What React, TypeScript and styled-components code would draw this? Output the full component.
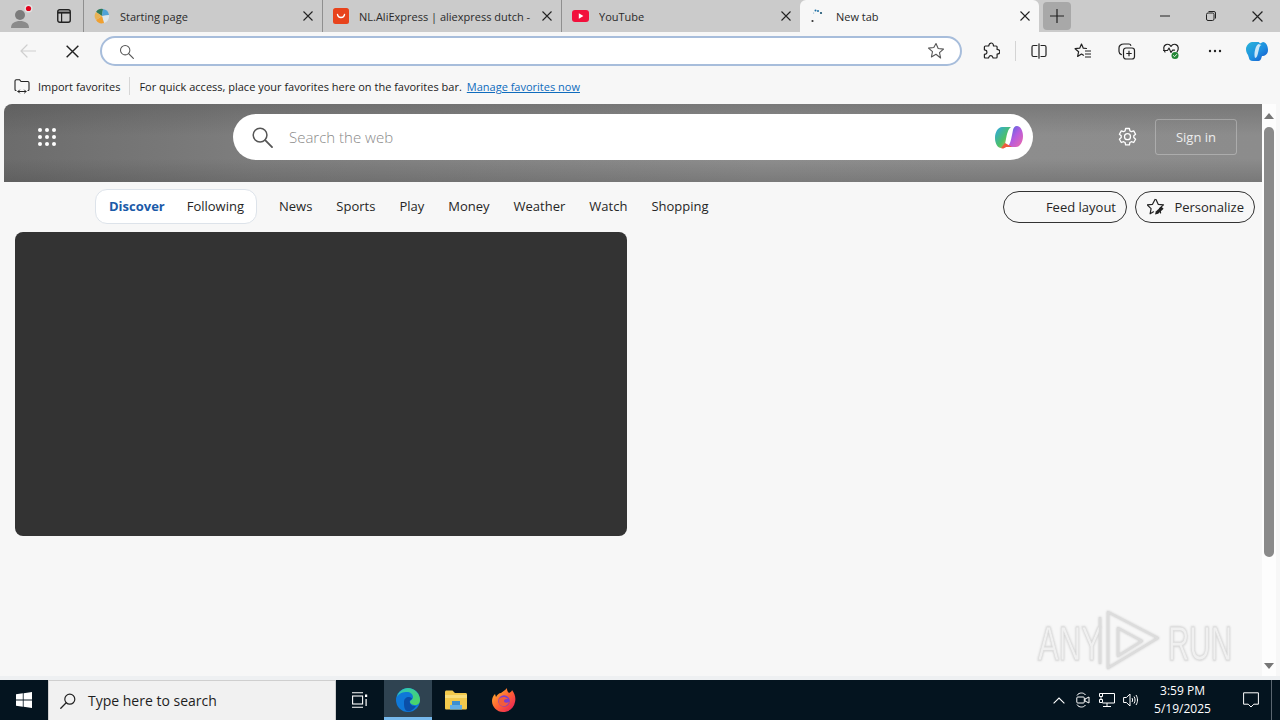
import React from 'react';
import styled, { createGlobalStyle } from 'styled-components';

const GlobalStyle = createGlobalStyle`
  html, body {
    margin: 0;
    padding: 0;
    background: #f7f7f7;
    overflow: hidden;
  }
  * {
    box-sizing: border-box;
  }
`;

const UI_FONT = `"Open Sans", "Noto Sans", "Liberation Sans", sans-serif`;

const Screen = styled.div`
  position: relative;
  width: 1280px;
  height: 720px;
  display: flex;
  flex-direction: column;
  overflow: hidden;
  font-family: ${UI_FONT};
  color: #1c1c1c;
  background: #f7f7f7;
`;

// Tab strip
const TabStrip = styled.div`
  height: 32px;
  display: flex;
  align-items: stretch;
  background: #cbcbcb;
`;

const ProfileSlot = styled.div`
  width: 44px;
  display: flex;
  align-items: center;
  justify-content: center;
`;

const VerticalTabsSlot = styled.div`
  width: 39px;
  display: flex;
  align-items: center;
  justify-content: center;
  padding-left: 0;
`;

const Tab = styled.div<{ $active?: boolean }>`
  position: relative;
  width: 239px;
  display: flex;
  align-items: center;
  padding: 0 9px 0 10px;
  gap: 10px;
  font-size: 11px;
  letter-spacing: 0;
  white-space: nowrap;
  background: ${(p) => (p.$active ? '#f7f7f7' : 'transparent')};
  border-radius: ${(p) => (p.$active ? '6px 6px 0 0' : '0')};
  border-left: ${(p) => (p.$active ? '0' : '1px solid #8f8f8f')};
  background-clip: ${(p) => (p.$active ? 'border-box' : 'content-box')};
`;

const TabTitle = styled.span`
  flex: 1;
  overflow: hidden;
  color: #2a2a2a;
`;

const NewTabButton = styled.div`
  width: 28px;
  height: 28px;
  margin: 2px 0 0 4px;
  border-radius: 4px;
  background: #a8a8a8;
  display: flex;
  align-items: center;
  justify-content: center;
`;

const WindowControls = styled.div`
  margin-left: auto;
  display: flex;
  align-items: center;
  padding-right: 0;
`;

const WindowButton = styled.div`
  width: 46px;
  height: 32px;
  display: flex;
  align-items: center;
  justify-content: center;
`;

// Toolbar
const Toolbar = styled.div`
  height: 36px;
  padding: 4px 2px 2px 6px;
  display: flex;
  align-items: center;
  background: #f7f7f7;
`;

const ToolButton = styled.div<{ $narrow?: boolean }>`
  width: ${(p) => (p.$narrow ? '40px' : '44px')};
  height: 30px;
  flex: none;
  display: flex;
  align-items: center;
  justify-content: center;
`;

const AddressBar = styled.div`
  width: 862px;
  height: 30px;
  margin: 0 7px 0 6px;
  padding: 0 15px 0 17px;
  display: flex;
  align-items: center;
  justify-content: space-between;
  border: 2px solid #a7bddb;
  border-radius: 15px;
  background: #ffffff;
`;

const ToolbarDivider = styled.div`
  width: 1px;
  height: 20px;
  margin: 0 1px 0 2px;
  background: #d4d4d4;
`;

// Favorites bar
const FavoritesBar = styled.div`
  height: 36px;
  padding: 0 0 0 14px;
  display: flex;
  align-items: center;
  font-size: 11px;
  white-space: nowrap;
  background: #f7f7f7;
`;

const FavoritesImport = styled.span`
  margin-left: 8px;
`;

const FavoritesDivider = styled.div`
  width: 1px;
  height: 18px;
  margin: 0 9px;
  background: #d6d6d6;
`;

const FavoritesLink = styled.span`
  margin-left: 5px;
  color: #0f6cbd;
  text-decoration: underline;
`;

// Page
const PageArea = styled.div`
  height: 572px;
  display: flex;
  padding-left: 4px;
`;

const Page = styled.div`
  width: 1258px;
  display: flex;
  flex-direction: column;
  background: #f7f7f7;
`;

const PageHeader = styled.header`
  height: 78px;
  flex: none;
  display: flex;
  align-items: flex-start;
  padding: 10px 24px 0 32px;
  border-radius: 8px 0 0 0;
  background: linear-gradient(180deg, #727272 0%, #808080 45%, #8b8b8b 70%, #6e6e6e 100%);
  background-image:
    linear-gradient(180deg, rgba(60, 60, 60, 0.25) 0%, rgba(0, 0, 0, 0) 40%, rgba(0, 0, 0, 0) 70%, rgba(50, 50, 50, 0.22) 100%),
    linear-gradient(90deg, #6c6c6c 0%, #7e7e7e 20%, #8e8e8e 60%, #8c8c8c 100%);
`;

const AppsButton = styled.div`
  width: 22px;
  height: 46px;
  margin-right: 175px;
  display: flex;
  align-items: center;
  justify-content: center;
`;

const SearchPill = styled.div`
  width: 800px;
  height: 46px;
  flex: none;
  padding: 0 8px 0 18px;
  display: flex;
  align-items: center;
  border-radius: 23px;
  background: #ffffff;
`;

const SearchPlaceholder = styled.span`
  flex: 1;
  margin-left: 16px;
  font-size: 15px;
  font-weight: 300;
  color: #8a8a8a;
`;

const GearButton = styled.div`
  width: 24px;
  height: 46px;
  margin-left: 82px;
  display: flex;
  align-items: center;
  justify-content: center;
`;

const SignInButton = styled.div`
  width: 82px;
  height: 36px;
  margin: 5px 0 0 16px;
  display: flex;
  align-items: center;
  justify-content: center;
  border: 1px solid rgba(255, 255, 255, 0.28);
  border-radius: 3px;
  font-size: 13px;
  color: #ececec;
`;

const NavRow = styled.nav`
  height: 50px;
  flex: none;
  display: flex;
  align-items: center;
  padding: 0 7px 0 91px;
  font-size: 13px;
  white-space: nowrap;
`;

const FeedSwitch = styled.div`
  width: 162px;
  height: 35px;
  margin: 0 22px 2px 0;
  padding: 0 12px 0 13px;
  display: flex;
  align-items: center;
  justify-content: space-between;
  border: 1px solid #dde3ea;
  border-radius: 12px;
  background: #ffffff;
`;

const FeedItem = styled.span<{ $active?: boolean }>`
  font-weight: ${(p) => (p.$active ? 700 : 400)};
  color: ${(p) => (p.$active ? '#1a5aa8' : '#262626')};
`;

const NavLinks = styled.div`
  display: flex;
  gap: 24px;
  margin-bottom: 2px;
  color: #262626;
`;

const NavActions = styled.div`
  margin-left: auto;
  display: flex;
  gap: 8px;
  color: #262626;
`;

const PillButton = styled.div<{ $width: number }>`
  width: ${(p) => p.$width}px;
  height: 32px;
  padding: 0 10px 0 11px;
  display: flex;
  align-items: center;
  justify-content: space-between;
  border: 1px solid #333333;
  border-radius: 16px;
`;

const EmptyIcon = styled.span`
  width: 18px;
`;

const FeedBody = styled.div`
  flex: 1;
  padding-left: 11px;
`;

const HeroCard = styled.div`
  width: 612px;
  height: 304px;
  border-radius: 8px;
  background: #333333;
`;

const Scrollbar = styled.div`
  width: 14px;
  margin-left: 0;
  display: flex;
  flex-direction: column;
  align-items: center;
  padding: 9px 0 7px;
  background: #fdfdfd;
`;

const ScrollThumb = styled.div`
  width: 10px;
  height: 430px;
  margin-top: 8px;
  border-radius: 5px;
  background: #8a8a8a;
`;

const ScrollArrow = styled.div<{ $down?: boolean }>`
  width: 0;
  height: 0;
  border-left: 5px solid transparent;
  border-right: 5px solid transparent;
  border-${(p) => (p.$down ? 'top' : 'bottom')}: 6px solid #777777;
  margin-top: ${(p) => (p.$down ? 'auto' : '0')};
`;

const PageGap = styled.div`
  height: 4px;
  flex: none;
  background: #eef0f2;
`;

// Taskbar
const Taskbar = styled.footer`
  height: 40px;
  flex: none;
  display: flex;
  align-items: stretch;
  background: #04141f;
  color: #ffffff;
`;

const StartButton = styled.div`
  width: 48px;
  display: flex;
  align-items: center;
  justify-content: center;
`;

const TaskSearch = styled.div`
  width: 288px;
  padding-left: 11px;
  display: flex;
  align-items: center;
  gap: 10px;
  font-size: 14px;
  color: #1e1e1e;
  background: #f1f1f1;
  border: 1px solid #cfcfcf;
  border-width: 1px 1px 0;
`;

const TaskItem = styled.div<{ $active?: boolean }>`
  width: 48px;
  display: flex;
  align-items: center;
  justify-content: center;
  background: ${(p) => (p.$active ? '#2f4351' : 'transparent')};
  border-bottom: ${(p) => (p.$active ? '3px solid #76b9ed' : '0')};
  padding-top: ${(p) => (p.$active ? '3px' : '0')};
`;

const TraySpacer = styled.div`
  flex: 1;
`;

const TrayIcon = styled.div`
  width: 24px;
  display: flex;
  align-items: center;
  justify-content: center;
`;

const Clock = styled.div`
  width: 75px;
  display: flex;
  flex-direction: column;
  align-items: center;
  justify-content: center;
  font-size: 12px;
  line-height: 18px;
  margin-left: 2px;
`;

const NotifyButton = styled.div`
  width: 40px;
  margin-left: 11px;
  display: flex;
  align-items: center;
  justify-content: center;
`;

const ShowDesktop = styled.div`
  width: 9px;
  border-left: 1px solid #5a6670;
`;

// Watermark lies over the page
const Watermark = styled.svg`
  position: absolute;
  left: 1034px;
  top: 606px;
  pointer-events: none;
`;

const stroke = { fill: 'none', strokeLinecap: 'round', strokeLinejoin: 'round' } as const;

const CloseIcon: React.FC<{ size?: number; color?: string }> = ({ size = 10, color = '#222' }) => (
  <svg width={size} height={size} viewBox="0 0 10 10" style={{ flex: 'none' }}>
    <path d="M.5.5l9 9M9.5.5l-9 9" stroke={color} strokeWidth="1.1" fill="none" />
  </svg>
);

const Profile = () => (
  <svg width="28" height="28" viewBox="0 0 28 28">
    <circle cx="12" cy="13" r="5" fill="#7c7c7c" />
    <path d="M3 26c0-5 4-7 9-7s9 2 9 7z" fill="#8b8b8b" />
    <circle cx="20.5" cy="6.5" r="4" fill="#e3e3e3" />
    <circle cx="20.5" cy="6.5" r="2.6" fill="#e3001b" />
  </svg>
);

const VerticalTabs = () => (
  <svg width="14" height="14" viewBox="0 0 14 14">
    <rect x=".75" y=".75" width="12.5" height="12.5" rx="2" stroke="#222" strokeWidth="1.4" fill="none" />
    <path d="M1 3.6h12" stroke="#222" strokeWidth="2" />
    <path d="M4.6 4v9" stroke="#222" strokeWidth="1.2" />
  </svg>
);

const StartingPageIcon = () => (
  <svg width="16" height="16" viewBox="0 0 16 16" style={{ flex: 'none' }}>
    <path d="M8 8L2 4a7 7 0 0 1 7-3z" fill="#2f7a5c" />
    <path d="M8 8l1-7a7 7 0 0 1 6 6z" fill="#4fa3d8" />
    <path d="M8 8l7-1a7 7 0 0 1-5 8z" fill="#dfe7ec" />
    <path d="M8 8l2 7a7 7 0 0 1-8-3z" fill="#f0a030" />
    <path d="M8 8l-6 4a7 7 0 0 1 0-8z" fill="#e8b355" />
  </svg>
);

const AliIcon = () => (
  <svg width="16" height="16" viewBox="0 0 16 16" style={{ flex: 'none' }}>
    <rect width="16" height="16" rx="2.5" fill="#e8431c" />
    <path d="M4.5 6.5c.5 4 6.5 4 7 0" stroke="#fff" strokeWidth="1.4" fill="none" strokeLinecap="round" />
  </svg>
);

const YoutubeIcon = () => (
  <svg width="17" height="12" viewBox="0 0 17 12" style={{ flex: 'none' }}>
    <rect width="17" height="12" rx="3" fill="#f2103c" />
    <path d="M6.8 3.2l4.6 2.8-4.6 2.8z" fill="#fff" />
  </svg>
);

const Spinner = () => (
  <svg width="16" height="16" viewBox="0 0 16 16" style={{ flex: 'none' }}>
    <circle cx="2.5" cy="13" r="1.1" fill="#333" />
    <circle cx="5.5" cy="2.5" r="1" fill="#1d6fa5" />
    <circle cx="8" cy="3" r="1" fill="#1d6fa5" />
    <circle cx="11" cy="5" r="1.1" fill="#14506f" />
    <circle cx="3.6" cy="5" r=".6" fill="#7aa9c6" />
  </svg>
);

const SearchGlass: React.FC<{ size: number; color: string }> = ({ size, color }) => (
  <svg width={size} height={size} viewBox="0 0 16 16" style={{ flex: 'none' }}>
    <circle cx="6.6" cy="6.6" r="5" stroke={color} strokeWidth="1.1" fill="none" />
    <path d="M10.3 10.3l5 5" stroke={color} strokeWidth="1.3" strokeLinecap="round" />
  </svg>
);

const BackArrow = () => (
  <svg width="16" height="14" viewBox="0 0 16 14">
    <path d="M15.5 7H1M7 1L1 7l6 6" stroke="#cfcfcf" strokeWidth="1.2" {...stroke} />
  </svg>
);

const StarIcon = () => (
  <svg width="18" height="18" viewBox="0 0 18 18">
    <path d="M9 1.6l2.2 4.9 5.3.6-4 3.6 1.1 5.3L9 12.3l-4.6 2.7 1.1-5.3-4-3.6 5.3-.6z" stroke="#555" strokeWidth="1.1" {...stroke} />
  </svg>
);

const ExtensionIcon = () => (
  <svg width="18" height="18" viewBox="0 0 18 18">
    <path d="M7 3a2.2 2.2 0 0 1 4.3-.4L11.5 4h2.6c.6 0 1 .4 1 1v2.4l1 .2a2.2 2.2 0 0 1 0 4.3l-1 .2V15c0 .6-.4 1-1 1h-3l-.4-1a2 2 0 0 0-3.8 0l-.4 1H3.4c-.6 0-1-.4-1-1v-2.6l1-.3a2 2 0 0 0 0-3.9l-1-.3V5c0-.6.4-1 1-1h3.3z" stroke="#222" strokeWidth="1.2" {...stroke} />
  </svg>
);

const SplitIcon = () => (
  <svg width="16" height="16" viewBox="0 0 16 16">
    <path d="M6 2.5H2.5a1.5 1.5 0 0 0-1.5 1.5v8a1.5 1.5 0 0 0 1.5 1.5H6M10 2.5h3.5A1.5 1.5 0 0 1 15 4v8a1.5 1.5 0 0 1-1.5 1.5H10M8 .8v14.4" stroke="#222" strokeWidth="1.2" {...stroke} />
  </svg>
);

const FavoritesIcon = () => (
  <svg width="18" height="18" viewBox="0 0 18 18">
    <path d="M7.5 2l1.8 4.2 3.2.3M7.5 2L5.7 6.2l-4.6.5 3.5 3.1-1 4.6 3.9-2.4 2 1.2" stroke="#222" strokeWidth="1.2" {...stroke} />
    <path d="M11 9h6M11 12h6M11 15h6" stroke="#222" strokeWidth="1.2" />
  </svg>
);

const CollectionsIcon = () => (
  <svg width="18" height="18" viewBox="0 0 18 18">
    <path d="M6 2h5c1 0 1.6.5 1.8 1.4M3.4 12.6C2 12 1 11 1 9.6V6c0-2 1.6-4 5-4" stroke="#222" strokeWidth="1.2" {...stroke} />
    <rect x="5.5" y="6" width="11" height="11" rx="2.5" stroke="#222" strokeWidth="1.2" fill="none" />
    <path d="M11 8.8v5.4M8.3 11.5h5.4" stroke="#222" strokeWidth="1.2" />
  </svg>
);

const HealthIcon = () => (
  <svg width="18" height="18" viewBox="0 0 18 18">
    <path d="M3 10C1 7 1.4 3.6 4 2.6c2-.8 4 .2 5 1.8 1-1.6 3-2.6 5-1.8 2.6 1 3 4.4 1 7.4" stroke="#222" strokeWidth="1.2" {...stroke} />
    <path d="M1.5 8.5h4l1.5-2.5 2 4.5 1.6-2.4h2" stroke="#222" strokeWidth="1.1" {...stroke} />
    <circle cx="13" cy="13.5" r="3.5" fill="#238636" />
    <path d="M11.4 13.6l1.2 1.1 2-2.2" stroke="#fff" strokeWidth=".9" {...stroke} />
  </svg>
);

const MoreIcon = () => (
  <svg width="14" height="4" viewBox="0 0 14 4">
    <circle cx="2" cy="2" r="1.2" fill="#222" />
    <circle cx="7" cy="2" r="1.2" fill="#222" />
    <circle cx="12" cy="2" r="1.2" fill="#222" />
  </svg>
);

const CopilotBlue = () => (
  <svg width="24" height="24" viewBox="0 0 24 24">
    <defs>
      <linearGradient id="cpb" x1="0" y1="0" x2="1" y2="1">
        <stop offset="0" stopColor="#2bb4d8" />
        <stop offset="0.55" stopColor="#1d8fe0" />
        <stop offset="1" stopColor="#1750c8" />
      </linearGradient>
    </defs>
    <path d="M7 3h6c1 0 1.6.6 2 1.6L18 3c3 0 5 4 5 8s-3 6-6 6l-1 3c-.5 1.3-1.400 2-2.500 2H8c-3 0-4-2-4-3l-1-3C1.500 14 1 12 1 10c0-3 3-7 6-7z" fill="url(#cpb)" />
    <path d="M13.500 5c-3 1-5 10-3.500 14 1 0 2-1 2.500-3l1.500-6c.4-2 1-3.500 2.500-4z" fill="#eaf6fb" opacity=".85" />
  </svg>
);

const CopilotColor = () => (
  <svg width="32" height="32" viewBox="0 0 32 32">
    <defs>
      <linearGradient id="cpl" x1="0" y1="0" x2="1" y2="1">
        <stop offset="0" stopColor="#2fa6e8" />
        <stop offset="0.55" stopColor="#4cc06a" />
        <stop offset="1" stopColor="#f4b63a" />
      </linearGradient>
      <linearGradient id="cpr" x1="0" y1="0" x2="1" y2="1">
        <stop offset="0" stopColor="#2b6fe0" />
        <stop offset="0.5" stopColor="#b35be0" />
        <stop offset="1" stopColor="#f06aa8" />
      </linearGradient>
    </defs>
    <path d="M9 6h9c-3 2-4 7-5 12l-1 5c-.5 2-1.500 4-4 4-3 0-6-4-6-10 0-6 3-11 7-11z" fill="url(#cpl)" />
    <path d="M23 26h-9c3-2 4-7 5-12l1-5c.5-2 1.500-4 4-4 3 0 6 4 6 10 0 6-3 11-7 11z" fill="url(#cpr)" />
    <path d="M12 22l7 4h-6c-2 1.500-3 2-5 1z" fill="#ef5a3c" />
  </svg>
);

const ImportIcon = () => (
  <svg width="16" height="16" viewBox="0 0 16 16" style={{ flex: 'none' }}>
    <path d="M2 12.500C1.200 12.500 1 12 1 11.500V3c0-.8.5-1.300 1.300-1.300h3.200L7 3.500h6.700c.8 0 1.300.5 1.300 1.300v6.700c0 .5-.3 1-1 1" stroke="#222" strokeWidth="1.100" {...stroke} />
    <path d="M4 13.500h8M5.500 12L4 13.500 5.500 15M10.500 12l1.500 1.500-1.500 1.500" stroke="#222" strokeWidth="1" {...stroke} />
  </svg>
);

const AppsGrid = () => (
  <svg width="18" height="18" viewBox="0 0 18 18">
    {[2, 9, 16].flatMap((y) =>
      [2, 9, 16].map((x) => <circle key={`${x}-${y}`} cx={x} cy={y} r="2" fill="#ffffff" />),
    )}
  </svg>
);

const GearIcon = () => (
  <svg width="21" height="21" viewBox="0 0 21 21">
    <path d="M8.600 1.500h3.800l.5 2.400 1.500.8 2.300-.8 1.900 3.300-1.800 1.600v1.800l1.800 1.600-1.900 3.300-2.300-.8-1.500.8-.5 2.400H8.600l-.5-2.400-1.500-.8-2.300.8-1.900-3.300 1.800-1.600V8.800L2.400 7.200l1.900-3.300 2.300.8 1.500-.8z" stroke="#fff" strokeWidth="1.300" {...stroke} />
    <circle cx="10.500" cy="9.700" r="3" stroke="#fff" strokeWidth="1.300" fill="none" />
  </svg>
);

const PersonalizeIcon = () => (
  <svg width="20" height="18" viewBox="0 0 20 18">
    <path d="M9 1.500l2.200 4.800 5.300.6-3.900 3.500 1 4.600M6.500 13.800l-3.400 2 1-5.200-3.900-3.700 5.300-.6L8 1.500" stroke="#222" strokeWidth="1.200" {...stroke} />
    <path d="M8 16.500l.8-3 5.500-5 2.300 2.300-5.500 5z" fill="#222" />
  </svg>
);

const WindowsLogo = () => (
  <svg width="16" height="16" viewBox="0 0 16 16">
    <path d="M0 2.300l6.800-1v6.300H0zM7.600 1.200L16 0v7.600H7.600zM0 8.400h6.800v6.300L0 13.700zM7.600 8.400H16V16l-8.400-1.200z" fill="#fff" />
  </svg>
);

const TaskGlass = () => (
  <svg width="16" height="16" viewBox="0 0 16 16" style={{ flex: 'none', marginRight: 2 }}>
    <circle cx="9.800" cy="6.200" r="5" stroke="#222" strokeWidth="1.200" fill="none" />
    <path d="M6.200 9.800L.8 15.200" stroke="#222" strokeWidth="1.300" strokeLinecap="round" />
  </svg>
);

const TaskView = () => (
  <svg width="16" height="16" viewBox="0 0 16 16">
    <path d="M0 .8h11M0 15.200h11" stroke="#fff" strokeWidth="1.100" />
    <rect x=".6" y="4" width="10" height="8" stroke="#fff" strokeWidth="1.100" fill="none" />
    <rect x="13" y="2.500" width="2.200" height="2.500" fill="#fff" />
    <rect x="13.500" y="7" width="1.200" height="7" fill="#fff" />
  </svg>
);

const EdgeIcon = () => (
  <svg width="24" height="24" viewBox="0 0 24 24">
    <defs>
      <linearGradient id="edg" x1="0" y1="0" x2="1" y2="1">
        <stop offset="0" stopColor="#2cc5c0" />
        <stop offset="1" stopColor="#4fd65c" />
      </linearGradient>
    </defs>
    <circle cx="12" cy="12" r="12" fill="#0f78d8" />
    <path d="M1 9C2 4 7 0 12 0c6 0 12 5 12 12 0 3-2 5-5 5-2 0-5-1-5-3 0-2 3-2 3-5 0-3-3-5-6-5C7 4 3 5 1 9z" fill="url(#edg)" />
    <path d="M8 14c0-3 2-5 5-5 2 0 3 1 3 2-2 1-3 2-2 4 1 3 4 3 6 3-2 3-5 6-9 5-3-1-3-6-3-9z" fill="#0b4fa8" />
  </svg>
);

const FolderIcon = () => (
  <svg width="22" height="20" viewBox="0 0 22 20">
    <path d="M0 2c0-1 .6-1.600 1.500-1.600h6L10 3h10.500c1 0 1.500.6 1.500 1.500V18c0 1-.6 1.500-1.500 1.500h-19C.5 19.500 0 19 0 18z" fill="#f2c94c" />
    <path d="M0 5h22v3H0z" fill="#f8dd7a" />
    <rect x="7" y="11" width="8" height="5" fill="#3d8fd1" />
    <rect x="5" y="15" width="12" height="4.500" fill="#62aee6" />
  </svg>
);

const FirefoxIcon = () => (
  <svg width="24" height="26" viewBox="0 0 24 26">
    <defs>
      <linearGradient id="ffx" x1="0" y1="0" x2="1" y2="1">
        <stop offset="0" stopColor="#ffbd2e" />
        <stop offset="0.5" stopColor="#ff6133" />
        <stop offset="1" stopColor="#e5165f" />
      </linearGradient>
    </defs>
    <path d="M3 7l1 3c1-2 3-4 5-4 2-2 5-3 6-5 0 2 0 3 2 5 2-1 3-2 3-3 3 4 4 8 3 12-1 6-6 10-12 10C5 25 0 20 0 14c0-3 1-5 3-7z" fill="url(#ffx)" />
    <circle cx="12" cy="14" r="5.800" fill="#7b3fd0" />
    <path d="M7 12c2-2 6-3 9 0-2 0-4 0-4 2s3 2 5 1c-1 3-4 5-7 4-3-1-4-4-3-7z" fill="#f25c3c" />
  </svg>
);

const Chevron = () => (
  <svg width="12" height="7" viewBox="0 0 12 7">
    <path d="M.6 6.400L6 1l5.400 5.400" stroke="#fff" strokeWidth="1.100" fill="none" />
  </svg>
);

const MeetIcon = () => (
  <svg width="14" height="16" viewBox="0 0 14 16">
    <path d="M1 3.500C2 1.500 4 1 5.500 1s3 .5 4 2M1 12.500c1 2 3 2.500 4.500 2.500s3-.5 4-2" stroke="#fff" strokeWidth="1" fill="none" />
    <rect x=".8" y="5" width="7.500" height="6" rx="1" stroke="#fff" strokeWidth="1" fill="none" />
    <path d="M9 7l4-2v6L9 9z" stroke="#fff" strokeWidth="1" fill="none" />
  </svg>
);

const NetworkIcon = () => (
  <svg width="16" height="16" viewBox="0 0 16 16">
    <path d="M.5 1.500h15v9.500H3.500M8 11v3M4 14.500h8" stroke="#fff" strokeWidth="1" fill="none" />
    <path d="M.5 1.500v3h3v-3M2 4.500v3M.5 7.500h3v3h-3z" stroke="#fff" strokeWidth="1" fill="none" />
  </svg>
);

const VolumeIcon = () => (
  <svg width="16" height="14" viewBox="0 0 16 14">
    <path d="M.6 4.500h2.800L7 1v12L3.400 9.500H.6z" stroke="#fff" strokeWidth="1" fill="none" />
    <path d="M9 5c.8 1.200.8 2.800 0 4M11 3.500c1.400 2 1.400 5 0 7M13 2c2 3 2 7 0 10" stroke="#fff" strokeWidth="1" fill="none" />
  </svg>
);

const NotificationIcon = () => (
  <svg width="16" height="16" viewBox="0 0 16 16">
    <path d="M.6.800h14.800v11.400h-4.600L8 15l-2.800-2.800H.6z" stroke="#fff" strokeWidth="1" fill="none" />
  </svg>
);

const WatermarkLogo = () => (
  <Watermark width="204" height="70" viewBox="0 0 204 70" style={{ filter: 'drop-shadow(0 0 1px rgba(120,120,120,0.35))' }}>
    <text x="4" y="54" fontFamily="Liberation Sans" fontSize="48" textLength="64" lengthAdjust="spacingAndGlyphs" fill="#f0f0f0" stroke="#dedede" strokeWidth="0.8">ANY</text>
    <path d="M66 11 L66 58 M74 6 L74 62 L124 32 Z M84 22 L84 50 L108 35 Z" stroke="#dcdcdc" strokeWidth="2.500" fill="none" strokeLinejoin="round" />
    <text x="134" y="54" fontFamily="Liberation Sans" fontSize="48" textLength="64" lengthAdjust="spacingAndGlyphs" fill="#f0f0f0" stroke="#dedede" strokeWidth="0.8">RUN</text>
  </Watermark>
);

const App: React.FC = () => (
  <Screen>
    <GlobalStyle />
    <TabStrip>
      <ProfileSlot>
        <Profile />
      </ProfileSlot>
      <VerticalTabsSlot>
        <VerticalTabs />
      </VerticalTabsSlot>
      <Tab>
        <StartingPageIcon />
        <TabTitle>Starting page</TabTitle>
        <CloseIcon />
      </Tab>
      <Tab>
        <AliIcon />
        <TabTitle>NL.AliExpress | aliexpress dutch -</TabTitle>
        <CloseIcon />
      </Tab>
      <Tab>
        <YoutubeIcon />
        <TabTitle>YouTube</TabTitle>
        <CloseIcon />
      </Tab>
      <Tab $active>
        <Spinner />
        <TabTitle>New tab</TabTitle>
        <CloseIcon />
      </Tab>
      <NewTabButton>
        <svg width="14" height="14" viewBox="0 0 14 14">
          <path d="M7 0v14M0 7h14" stroke="#222" strokeWidth="1.200" />
        </svg>
      </NewTabButton>
      <WindowControls>
        <WindowButton>
          <svg width="10" height="2" viewBox="0 0 10 2">
            <path d="M0 1h10" stroke="#222" strokeWidth="1" />
          </svg>
        </WindowButton>
        <WindowButton>
          <svg width="10" height="10" viewBox="0 0 10 10">
            <rect x=".5" y="2" width="7.500" height="7.500" rx="1.500" stroke="#222" fill="none" />
            <path d="M2.500.5h5.500a1.500 1.500 0 0 1 1.500 1.500v5.500" stroke="#222" fill="none" />
          </svg>
        </WindowButton>
        <WindowButton>
          <CloseIcon size={11} />
        </WindowButton>
      </WindowControls>
    </TabStrip>

    <Toolbar>
      <ToolButton>
        <BackArrow />
      </ToolButton>
      <ToolButton>
        <CloseIcon size={13} />
      </ToolButton>
      <AddressBar>
        <SearchGlass size={15} color="#555" />
        <StarIcon />
      </AddressBar>
      <ToolButton>
        <ExtensionIcon />
      </ToolButton>
      <ToolbarDivider />
      <ToolButton>
        <SplitIcon />
      </ToolButton>
      <ToolButton>
        <FavoritesIcon />
      </ToolButton>
      <ToolButton>
        <CollectionsIcon />
      </ToolButton>
      <ToolButton>
        <HealthIcon />
      </ToolButton>
      <ToolButton>
        <MoreIcon />
      </ToolButton>
      <ToolButton $narrow>
        <CopilotBlue />
      </ToolButton>
    </Toolbar>

    <FavoritesBar>
      <ImportIcon />
      <FavoritesImport>Import favorites</FavoritesImport>
      <FavoritesDivider />
      <span>For quick access, place your favorites here on the favorites bar.</span>
      <FavoritesLink>Manage favorites now</FavoritesLink>
    </FavoritesBar>

    <PageArea>
      <Page>
        <PageHeader>
          <AppsButton>
            <AppsGrid />
          </AppsButton>
          <SearchPill>
            <SearchGlass size={22} color="#555" />
            <SearchPlaceholder>Search the web</SearchPlaceholder>
            <CopilotColor />
          </SearchPill>
          <GearButton>
            <GearIcon />
          </GearButton>
          <SignInButton>Sign in</SignInButton>
        </PageHeader>
        <NavRow>
          <FeedSwitch>
            <FeedItem $active>Discover</FeedItem>
            <FeedItem>Following</FeedItem>
          </FeedSwitch>
          <NavLinks>
            <span>News</span>
            <span>Sports</span>
            <span>Play</span>
            <span>Money</span>
            <span>Weather</span>
            <span>Watch</span>
            <span>Shopping</span>
          </NavLinks>
          <NavActions>
            <PillButton $width={124}>
              <EmptyIcon />
              Feed layout
            </PillButton>
            <PillButton $width={120}>
              <PersonalizeIcon />
              Personalize
            </PillButton>
          </NavActions>
        </NavRow>
        <FeedBody>
          <HeroCard />
        </FeedBody>
      </Page>
      <Scrollbar>
        <ScrollArrow />
        <ScrollThumb />
        <ScrollArrow $down />
      </Scrollbar>
    </PageArea>
    <PageGap />

    <Taskbar>
      <StartButton>
        <WindowsLogo />
      </StartButton>
      <TaskSearch>
        <TaskGlass />
        Type here to search
      </TaskSearch>
      <TaskItem>
        <TaskView />
      </TaskItem>
      <TaskItem $active>
        <EdgeIcon />
      </TaskItem>
      <TaskItem>
        <FolderIcon />
      </TaskItem>
      <TaskItem>
        <FirefoxIcon />
      </TaskItem>
      <TraySpacer />
      <TrayIcon>
        <Chevron />
      </TrayIcon>
      <TrayIcon>
        <MeetIcon />
      </TrayIcon>
      <TrayIcon>
        <NetworkIcon />
      </TrayIcon>
      <TrayIcon>
        <VolumeIcon />
      </TrayIcon>
      <Clock>
        <span>3:59 PM</span>
        <span>5/19/2025</span>
      </Clock>
      <NotifyButton>
        <NotificationIcon />
      </NotifyButton>
      <ShowDesktop />
    </Taskbar>

    <WatermarkLogo />
  </Screen>
);

export default App;
